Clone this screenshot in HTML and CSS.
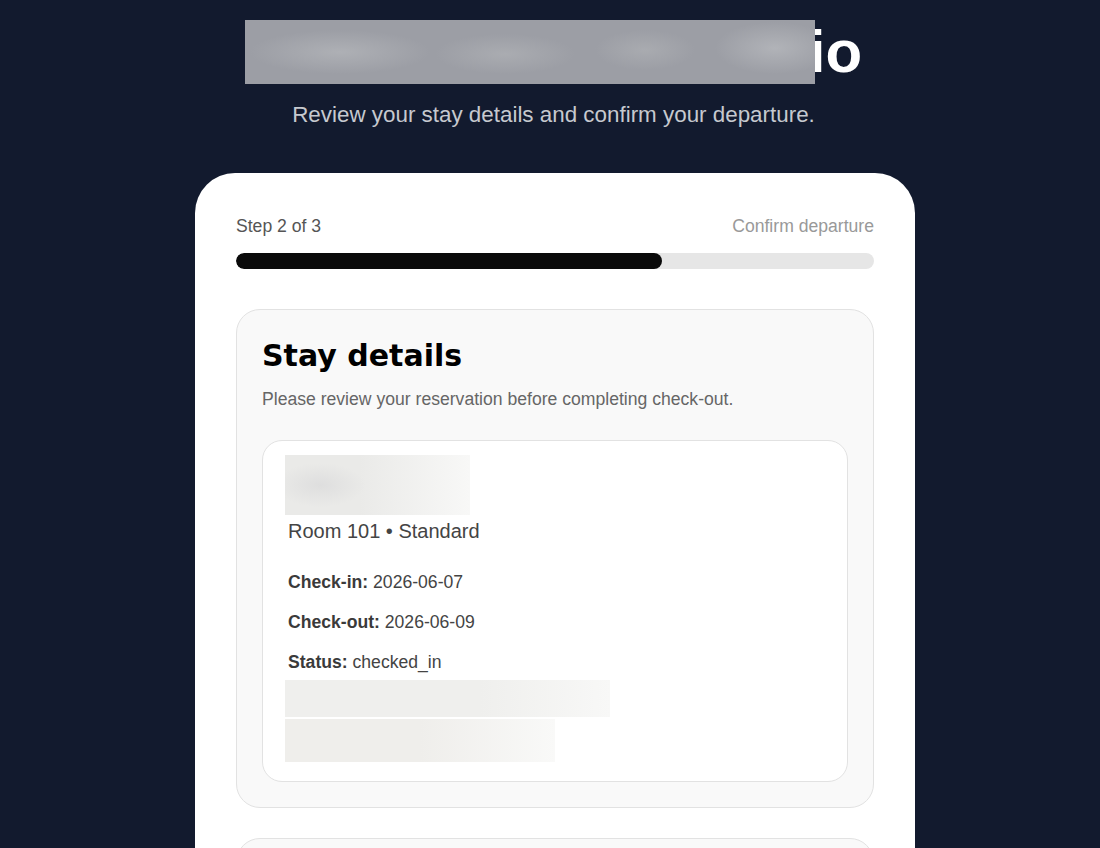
FILE: index.html
```html
<!DOCTYPE html>
<html lang="en">
<head>
    <meta charset="UTF-8">
    <meta name="viewport" content="width=device-width, initial-scale=1.0">
    <title>Guest Check-out</title>
    <link rel="stylesheet" href="styles.css">
</head>
<body>
    <div class="page">
        <header class="header">
            <h1 class="title"><span class="masked masked-title"></span>io</h1>
            <p class="subtitle">Review your stay details and confirm your departure.</p>
        </header>

        <main class="card">
            <div class="progress">
                <div class="progress-labels">
                    <span class="step">Step 2 of 3</span>
                    <span class="step-name">Confirm departure</span>
                </div>
                <div class="progress-track">
                    <div class="progress-fill" style="width: 66.7%;"></div>
                </div>
            </div>

            <section class="panel">
                <h2 class="panel-title">Stay details</h2>
                <p class="panel-desc">Please review your reservation before completing check-out.</p>

                <div class="stay">
                    <div class="masked masked-name"></div>
                    <div class="room">Room 101 &bull; Standard</div>
                    <div class="rows">
                        <p class="row"><strong>Check-in:</strong> 2026-06-07</p>
                        <p class="row"><strong>Check-out:</strong> 2026-06-09</p>
                        <p class="row"><strong>Status:</strong> checked_in</p>
                    </div>
                    <div class="masked masked-line1"></div>
                    <div class="masked masked-line2"></div>
                </div>
            </section>

            <section class="panel panel-next"></section>
        </main>
    </div>
</body>
</html>
```

FILE: styles.css
```css
body {
    margin: 0;
    background-color: #121a2e;
    font-family: "Liberation Sans", Arial, sans-serif;
    color: #333;
}
.page {
    display: flex;
    flex-direction: column;
    align-items: center;
    padding: 20px 0 0 7px;
}
.header {
    text-align: center;
}
.title {
    margin: 0;
    font-size: 60px;
    line-height: 64px;
    font-weight: 700;
    color: #fff;
    display: flex;
    align-items: center;
    justify-content: center;
}
.subtitle {
    margin: 18px 0 0;
    font-size: 22.4px;
    line-height: 26px;
    color: #c6c9cf;
}
.masked {
    background-color: #ececea;
}
.masked-title {
    display: inline-block;
    width: 570px;
    height: 64px;
    margin-right: -6px;
    position: relative;
    z-index: 1;
    background-color: #9c9ea5;
    background-image:
        radial-gradient(ellipse 90px 22px at 95px 32px, #aeb0b5, transparent),
        radial-gradient(ellipse 70px 20px at 260px 34px, #aaacb1, transparent),
        radial-gradient(ellipse 50px 20px at 400px 30px, #a9abb0, transparent),
        radial-gradient(ellipse 60px 26px at 530px 28px, #b1b3b8, transparent);
}
.card {
    width: 638px;
    margin-top: 45px;
    margin-left: 3px;
    padding: 43px 41px 0;
    background-color: #fff;
    border-radius: 40px 40px 0 0;
    min-height: 640px;
    font-size: 17.6px;
}
.progress-labels {
    display: flex;
    justify-content: space-between;
    line-height: 20px;
}
.step {
    color: #555;
}
.step-name {
    color: #999;
}
.progress-track {
    margin-top: 17px;
    height: 16px;
    border-radius: 8px;
    background-color: #e6e6e6;
    overflow: hidden;
}
.progress-fill {
    height: 100%;
    border-radius: 8px;
    background-color: #0a0a0a;
}
.panel {
    margin-top: 40px;
    padding: 28px 25px 25px;
    background-color: #f9f9f9;
    border: 1px solid #e2e2e2;
    border-radius: 24px;
}
.panel-title {
    margin: 0;
    font-family: "DejaVu Sans", "Liberation Sans", sans-serif;
    font-size: 30px;
    line-height: 35px;
    font-weight: 700;
    color: #000;
}
.panel-desc {
    margin: 16px 0 0;
    line-height: 20px;
    color: #666;
}
.stay {
    margin-top: 31px;
    padding: 14px 22px 19px;
    background-color: #fff;
    border: 1px solid #e2e2e2;
    border-radius: 20px;
}
.masked-name {
    width: 185px;
    height: 60px;
    background-image: radial-gradient(ellipse 45px 22px at 35px 30px, #dedede, transparent),
        linear-gradient(90deg, #eaeae8 40%, #f8f8f7);
}
.room {
    margin-top: 5px;
    padding-left: 3px;
    font-size: 20px;
    line-height: 23px;
    color: #444;
}
.rows {
    display: flex;
    flex-direction: column;
    gap: 20px;
    margin-top: 29px;
    padding-left: 3px;
}
.row {
    margin: 0;
    line-height: 20px;
    color: #444;
}
.row strong {
    color: #3a3a3a;
}
.masked-line1 {
    margin-top: 8px;
    width: 325px;
    height: 37px;
    background-image: linear-gradient(90deg, #efefed 60%, #f8f8f7);
}
.masked-line2 {
    margin-top: 2px;
    width: 270px;
    height: 43px;
    background-image: linear-gradient(90deg, #efeeeb 50%, #f9f9f8);
}
.panel-next {
    margin-top: 30px;
    min-height: 80px;
}
```
